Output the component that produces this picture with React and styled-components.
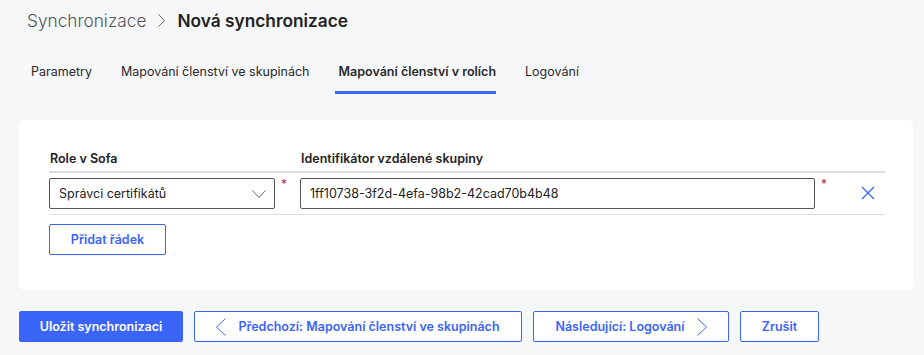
import styled, { createGlobalStyle } from 'styled-components';

const GlobalStyle = createGlobalStyle`
  html, body {
    margin: 0;
    padding: 0;
    background: #f6f7f9;
    font-family: Inter, "Liberation Sans", sans-serif;
    color: #222;
  }
  * { box-sizing: border-box; }
`;

const BLUE = '#3b64f8';

const Page = styled.div`
  padding: 8px 11px 14px 19px;
`;

const Breadcrumb = styled.div`
  display: flex;
  align-items: center;
  gap: 12px;
  padding-left: 8px;
  height: 24px;
  font-size: 17.3px;
`;

const Crumb = styled.span`
  color: ${(p) => (p.$current ? '#222' : '#555')};
  font-weight: ${(p) => (p.$current ? 600 : 300)};
`;

const Tabs = styled.div`
  display: flex;
  gap: 25px;
  margin-top: 25px;
  padding-left: 8px;
`;

const Tab = styled.div`
  padding: 7px 0 12px 4px;
  font-size: 12.5px;
  font-weight: ${(p) => (p.$active ? 600 : 400)};
  color: #2a2a2a;
  border-bottom: 3px solid ${(p) => (p.$active ? BLUE : 'transparent')};
  white-space: nowrap;
`;

const Card = styled.div`
  margin-top: 26px;
  background: #fff;
  border-radius: 6px;
  padding: 31px 28px 35px 30px;
`;

const Grid = styled.div`
  display: grid;
  grid-template-columns: 226px 25px 530px 1fr;
  margin-bottom: 9px;
`;

const HeadCell = styled.div`
  font-size: 12.5px;
  font-weight: 600;
  height: 22px;
  padding: 0 0 0 1px;
  border-bottom: 2px solid #dcdcdc;
  color: #222;
`;

const Cell = styled.div`
  height: 42px;
  padding-top: 5px;
  border-bottom: 1px solid #dedede;
  display: flex;
  align-items: flex-start;
  justify-content: ${(p) => p.$justify || 'flex-start'};
`;

const Field = styled.div`
  flex: 0 0 ${(p) => p.$w}px;
  height: 31px;
  border: 1px solid #555;
  border-radius: 2px;
  display: flex;
  align-items: center;
  justify-content: space-between;
  padding: 0 8px 0 9px;
  font-size: 12.5px;
  color: #222;
  white-space: nowrap;
`;

const Req = styled.span`
  color: #c0272d;
  font-size: 12px;
  margin-left: 6px;
  line-height: 1;
`;

const CloseWrap = styled.div`
  display: flex;
  padding: 8px 10px 0 0;
`;

const Button = styled.button`
  height: 31px;
  padding: 0;
  border-radius: 2px;
  border: 1px solid ${BLUE};
  background: ${(p) => (p.$primary ? BLUE : '#fff')};
  color: ${(p) => (p.$primary ? '#fff' : BLUE)};
  font-family: inherit;
  font-size: 12.5px;
  font-weight: 600;
  display: inline-flex;
  align-items: center;
  justify-content: center;
  gap: 12px;
  white-space: nowrap;
  cursor: pointer;
  width: ${(p) => p.$w}px;
  flex: none;
`;

const Footer = styled.div`
  display: flex;
  gap: 11px;
  margin-top: 21px;
`;

const Chevron = ({ dir = 'right', w = 8, h = 14, color = '#555' }) => {
  const d = {
    right: `M0.5 0.5 L${w - 0.5} ${h / 2} L0.5 ${h - 0.5}`,
    left: `M${w - 0.5} 0.5 L0.5 ${h / 2} L${w - 0.5} ${h - 0.5}`,
    down: `M0.5 0.5 L${w / 2} ${h - 0.5} L${w - 0.5} 0.5`,
  }[dir];
  return (
    <svg width={w} height={h} viewBox={`0 0 ${w} ${h}`} fill="none">
      <path d={d} stroke={color} strokeWidth="1" />
    </svg>
  );
};

const Close = () => (
  <svg width="14" height="14" viewBox="0 0 14 14" fill="none">
    <path d="M1 1 L13 13 M13 1 L1 13" stroke={BLUE} strokeWidth="1.3" />
  </svg>
);

export default function App() {
  return (
    <>
      <GlobalStyle />
      <Page>
        <Breadcrumb>
          <Crumb>Synchronizace</Crumb>
          <Chevron dir="right" w={7} h={13} color="#666" />
          <Crumb $current>Nová synchronizace</Crumb>
        </Breadcrumb>
        <Tabs>
          <Tab>Parametry</Tab>
          <Tab>Mapování členství ve skupinách</Tab>
          <Tab $active>Mapování členství v rolích</Tab>
          <Tab>Logování</Tab>
        </Tabs>
        <Card>
          <Grid>
            <HeadCell>Role v Sofa</HeadCell>
            <HeadCell />
            <HeadCell>Identifikátor vzdálené skupiny</HeadCell>
            <HeadCell />
            <Cell>
              <Field $w={226}>
                Správci certifikátů
                <Chevron dir="down" w={14} h={8} color="#666" />
              </Field>
            </Cell>
            <Cell>
              <Req>*</Req>
            </Cell>
            <Cell>
              <Field $w={515}>1ff10738-3f2d-4efa-98b2-42cad70b4b48</Field>
              <Req>*</Req>
            </Cell>
            <Cell $justify="flex-end">
              <CloseWrap>
                <Close />
              </CloseWrap>
            </Cell>
          </Grid>
          <Button $w={117}>Přidat řádek</Button>
        </Card>
        <Footer>
          <Button $primary $w={164}>Uložit synchronizaci</Button>
          <Button $w={328}>
            <Chevron dir="left" w={10} h={18} color={BLUE} />
            Předchozí: Mapování členství ve skupinách
          </Button>
          <Button $w={196}>
            Následující: Logování
            <Chevron dir="right" w={10} h={18} color={BLUE} />
          </Button>
          <Button $w={79}>Zrušit</Button>
        </Footer>
      </Page>
    </>
  );
}
